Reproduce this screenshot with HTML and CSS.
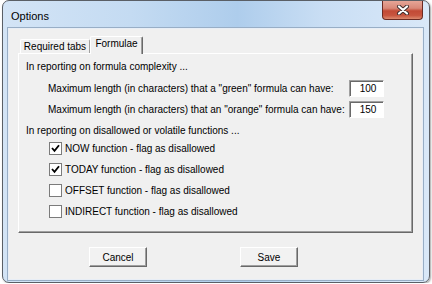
FILE: index.html
```html
<!DOCTYPE html>
<html lang="en">
<head>
    <meta charset="UTF-8">
    <meta name="viewport" content="width=device-width, initial-scale=1.0">
    <title>Options</title>
    <link rel="stylesheet" href="styles.css">
</head>
<body>

    <div class="window">
        <!-- Title bar -->
        <div class="titlebar">
            <span class="title">Options</span>
            <div class="close-btn">
                <svg width="14" height="10" viewBox="0 0 14 10">
                    <path d="M3 1.5 L11 8.5 M11 1.5 L3 8.5" stroke="#3b2a2a" stroke-width="4" stroke-linecap="round"/>
                    <path d="M3 1.5 L11 8.5 M11 1.5 L3 8.5" stroke="#ffffff" stroke-width="2.2" stroke-linecap="round"/>
                </svg>
            </div>
        </div>

        <div class="client">
            <!-- Tabs -->
            <div class="tabs">
                <div class="tab">Required tabs</div>
                <div class="tab tab-active">Formulae</div>
            </div>

            <div class="panel">
                <p class="section-title">In reporting on formula complexity ...</p>

                <div class="fields">
                    <div class="field">
                        <label>Maximum length (in characters) that a "green" formula can have:</label>
                        <div class="text-input">100</div>
                    </div>
                    <div class="field">
                        <label>Maximum length (in characters) that an "orange" formula can have:</label>
                        <div class="text-input">150</div>
                    </div>
                </div>

                <p class="section-title second">In reporting on disallowed or volatile functions ...</p>

                <div class="check-row">
                    <span class="check checked"><svg width="9" height="9" viewBox="0 0 9 9"><path d="M1 4 L3.5 6.8 L8 1.2" fill="none" stroke="#000" stroke-width="1.8"/></svg></span>
                    <span>NOW function - flag as disallowed</span>
                </div>
                <div class="check-row">
                    <span class="check checked"><svg width="9" height="9" viewBox="0 0 9 9"><path d="M1 4 L3.5 6.8 L8 1.2" fill="none" stroke="#000" stroke-width="1.8"/></svg></span>
                    <span>TODAY function - flag as disallowed</span>
                </div>
                <div class="check-row">
                    <span class="check"></span>
                    <span>OFFSET function - flag as disallowed</span>
                </div>
                <div class="check-row">
                    <span class="check"></span>
                    <span>INDIRECT function - flag as disallowed</span>
                </div>
            </div>

            <!-- Buttons -->
            <div class="buttons">
                <button>Cancel</button>
                <button>Save</button>
            </div>
        </div>
    </div>

</body>
</html>
```

FILE: styles.css
```css
body {
    margin: 0;
    background-color: #ffffff;
    font-family: 'Liberation Sans', Arial, sans-serif;
    font-size: 10px;
    color: #000;
    overflow: hidden;
}

/* Window frame */
.window {
    width: 428px;
    height: 283px;
    margin-left: 2px;
    box-sizing: border-box;
    border: 1px solid #5a5f66;
    border-radius: 7px;
    background: linear-gradient(to right, #d3e4f6 0%, #c4dbf2 30%, #aecdec 55%, #c9def4 75%, #d9e8f8 100%);
    display: flex;
    flex-direction: column;
    box-shadow: 1px 1px 2px rgba(0, 0, 0, 0.35);
}

.titlebar {
    height: 28px;
    display: flex;
    align-items: flex-start;
    padding-left: 8px;
}

.title {
    font-size: 11px;
    margin-top: 9px;
}

.close-btn {
    margin-left: auto;
    margin-right: 6px;
    width: 41px;
    height: 19px;
    box-sizing: border-box;
    border: 1px solid #6b2a22;
    border-top: none;
    border-radius: 0 0 4px 4px;
    background: linear-gradient(to bottom, #e6a597 0%, #d98878 40%, #c24a36 55%, #c8553f 80%, #dc8a6f 100%);
    display: flex;
    align-items: center;
    justify-content: center;
}

.close-btn svg {
    display: block;
}

.client {
    margin-left: 6px;
    margin-right: 7px;
    height: 250px;
    background-color: #f0f0f0;
    box-shadow: 0 0 0 1px #e8eef6, 0 0 0 2px #98aec6;
}

/* Tabs */
.tabs {
    display: flex;
    align-items: flex-end;
    height: 24px;
    padding-left: 11px;
    box-sizing: border-box;
    padding-top: 7px;
}

.tab {
    height: 14px;
    box-sizing: border-box;
    width: 70px;
    text-align: center;
    line-height: 13px;
    border-top: 1px solid #fff;
    border-left: 1px solid #fff;
    border-right: 1px solid #a0a0a0;
    border-radius: 2px 2px 0 0;
}

.tab-active {
    width: 53px;
    height: 18px;
    line-height: 14px;
    margin-bottom: -1px;
    background-color: #f0f0f0;
    position: relative;
    z-index: 1;
    border-right: 1px solid #696969;
    box-shadow: inset -1px 0 0 #a0a0a0;
}

.panel {
    margin-left: 9px;
    width: 395px;
    height: 180px;
    box-sizing: border-box;
    border-top: 1px solid #fff;
    border-left: 1px solid #fff;
    border-right: 1px solid #696969;
    border-bottom: 1px solid #696969;
    box-shadow: inset -1px -1px 0 #a0a0a0;
    padding-left: 7px;
    padding-top: 6px;
}

.section-title {
    margin: 0;
    height: 14px;
    line-height: 14px;
}

.section-title.second {
    margin-top: 4px;
}

.fields {
    margin-top: 4px;
}

.field {
    height: 21px;
    display: flex;
    align-items: center;
    padding-left: 22px;
}

.field label {
    width: 301px;
}

.text-input {
    width: 35px;
    height: 17px;
    box-sizing: border-box;
    background-color: #fff;
    border-top: 1px solid #a0a0a0;
    border-left: 1px solid #a0a0a0;
    border-right: 1px solid #fff;
    border-bottom: 1px solid #fff;
    box-shadow: inset 1px 1px 0 #696969;
    text-align: center;
    line-height: 15px;
    padding-left: 3px;
}

.check-row {
    height: 21px;
    display: flex;
    align-items: center;
    padding-left: 23px;
}

.check {
    width: 13px;
    height: 13px;
    box-sizing: border-box;
    border: 1px solid #7b7b7b;
    background-color: #fff;
    margin-right: 3px;
    display: flex;
    align-items: center;
    justify-content: center;
}

.check svg {
    display: block;
}

/* Buttons */
.buttons {
    display: flex;
    padding-left: 80px;
    gap: 93px;
    margin-top: 14px;
}

button {
    width: 58px;
    height: 20px;
    font-family: 'Liberation Sans', Arial, sans-serif;
    font-size: 10px;
    color: #000;
    background-color: #f2f2f2;
    border-top: 1px solid #fff;
    border-left: 1px solid #fff;
    border-right: 1px solid #696969;
    border-bottom: 1px solid #696969;
    box-shadow: inset -1px -1px 0 #a0a0a0;
    padding: 0;
}
```
